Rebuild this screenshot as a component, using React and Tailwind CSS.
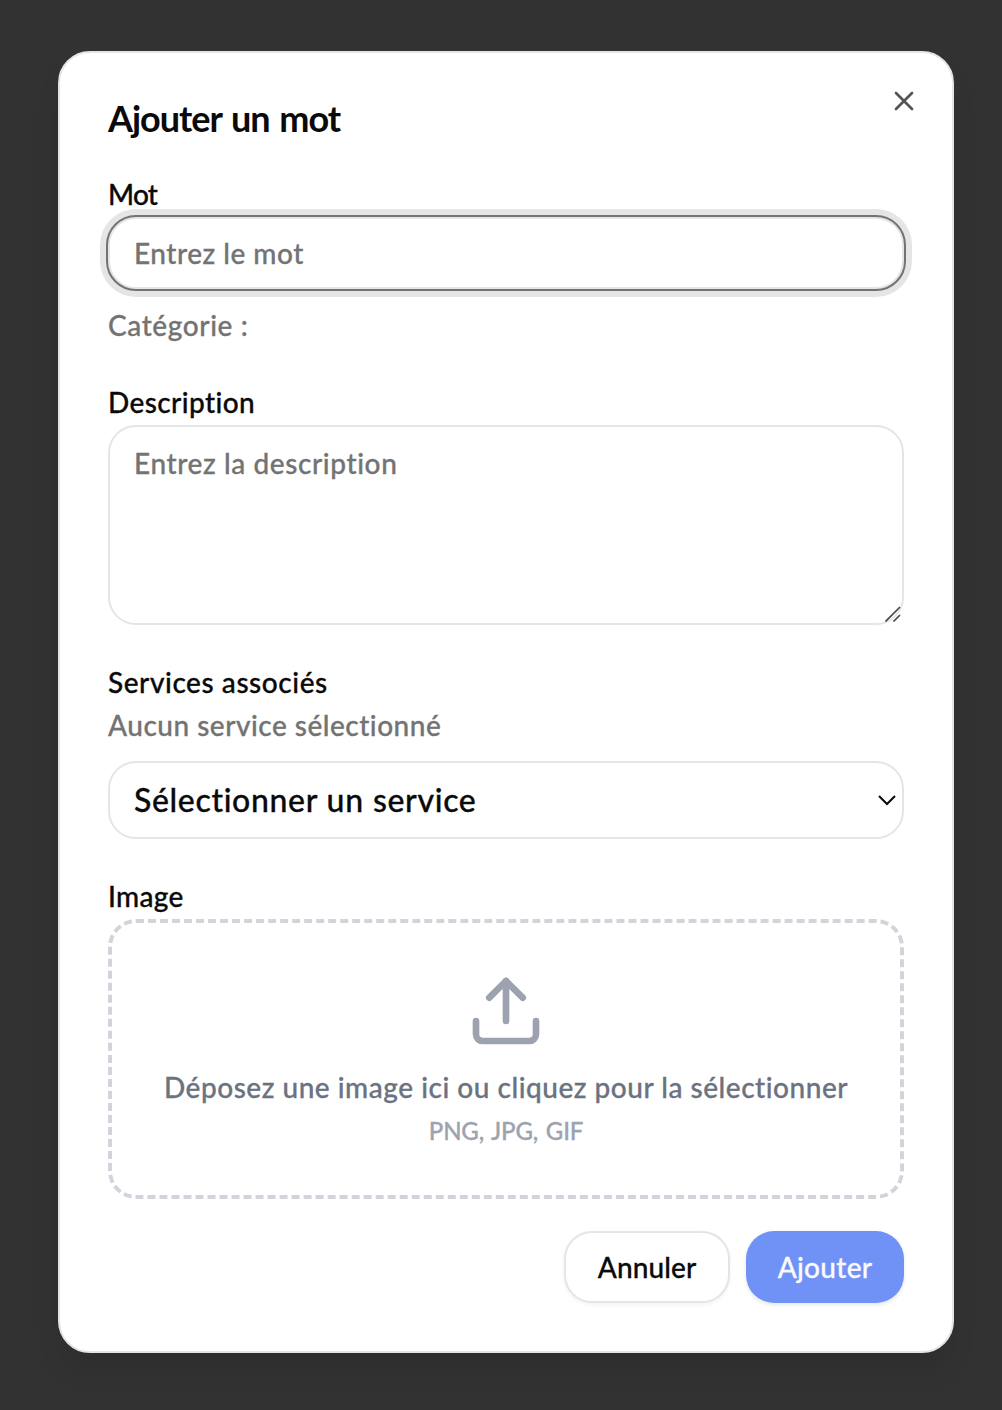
import React from "react";
import { X } from "lucide-react";

function Label({ htmlFor, className = "", children }) {
  return (
    <label htmlFor={htmlFor} className="mb-[9px] -mt-px block h-7 text-[28px] leading-7 whitespace-nowrap text-[#0a0a0a]">
      <span className={className}>{children}</span>
    </label>
  );
}

function UploadIcon() {
  return (
    <svg className="size-20 text-[#9ca3af]" viewBox="0 0 24 24" fill="none" stroke="currentColor" strokeWidth="2" strokeLinecap="round" strokeLinejoin="round">
      <path d="M21 15v4a2 2 0 0 1-2 2H5a2 2 0 0 1-2-2v-4" />
      <path d="M17 8l-5-5-5 5" />
      <path d="M12 3v12" />
    </svg>
  );
}

export default function App() {
  return (
    <div className="flex h-[1410px] w-[1002px] items-start bg-[#323232] pt-[51px] pl-[58px] font-['Lato','Noto_Sans',sans-serif] font-medium [-webkit-text-stroke:0.3px_currentColor]">
      <div role="dialog" className="relative flex h-[1302px] w-[896px] flex-col rounded-[32px] border-2 border-[#e5e5e5] bg-white p-12 shadow-[0_20px_30px_-6px_rgba(0,0,0,0.1)]">
        <button aria-label="Fermer" className="absolute top-8 right-8 text-[#545454]">
          <X className="size-8" strokeWidth={2} />
        </button>

        <h2 className="-mt-px mb-px h-9 text-[36px] leading-9 font-bold whitespace-nowrap text-[#0a0a0a] [-webkit-text-stroke:0px]">
          <span className="tracking-[-1px] [word-spacing:2px]">Ajouter un mot</span>
        </h2>

        <div className="mt-11">
          <Label htmlFor="mot" className="tracking-[-0.8px]">Mot</Label>
          <input
            id="mot"
            placeholder="Entrez le mot"
            className="block h-[72px] w-full rounded-[28px] border-2 border-[#e5e5e5] bg-white px-6 text-[28px] tracking-[0.5px] shadow-[0_0_0_8px_#e5e5e5] outline-2 outline-[#737373] placeholder:text-[#737373]"
          />
          <p className="mt-4 h-10 text-[28px] leading-10 whitespace-nowrap text-[#737373]">
            <span className="tracking-[0.6px]">Catégorie :</span>
          </p>
        </div>

        <div className="mt-11">
          <Label htmlFor="description" className="tracking-[0.4px]">Description</Label>
          <div className="relative">
            <textarea
              id="description"
              placeholder="Entrez la description"
              className="block h-[200px] w-full resize-none rounded-[28px] border-2 border-[#e5e5e5] bg-white px-6 py-4 text-[28px] leading-10 tracking-[0.6px] outline-none placeholder:text-[#737373]"
            />
            <svg className="absolute right-[3px] bottom-[3px] h-4 w-4" viewBox="0 0 16 16" fill="none" stroke="#484848" strokeWidth="1.7">
              <path d="M0.5 15.5L15 1M8.5 15.5L15 9" />
            </svg>
          </div>
        </div>

        <div className="mt-11">
          <Label htmlFor="service" className="tracking-[0.56px]">Services associés</Label>
          <p className="h-10 text-[28px] leading-10 whitespace-nowrap text-[#737373]">
            <span className="tracking-[0.5px]">Aucun service sélectionné</span>
          </p>
          <button id="service" className="mt-4 flex h-[78px] w-full items-center justify-between rounded-[28px] border-2 border-[#e5e5e5] pr-[5px] pl-6 text-[32px] text-[#0a0a0a]">
            <span className="tracking-[0.65px] [word-spacing:0.5px]">Sélectionner un service</span>
            <svg className="h-3 w-5" viewBox="0 0 20 12" fill="none" stroke="#0a0a0a" strokeWidth="2">
              <path d="M2 2L10 10L18 2" />
            </svg>
          </button>
        </div>

        <div className="mt-11">
          <Label className="tracking-[0.3px]">Image</Label>
          <div className="flex h-[280px] flex-col items-center rounded-[28px] border-4 border-dashed border-[#d1d5db] pt-12 whitespace-nowrap">
            <UploadIcon />
            <p className="mt-4 h-10 text-[28px] leading-10 text-[#6b7280]">
              <span className="tracking-[0.52px]">Déposez une image ici ou cliquez pour la sélectionner</span>
            </p>
            <p className="mt-2 h-8 text-2xl leading-8 text-[#9ca3af]">
              <span className="tracking-[-0.2px] [word-spacing:2px]">PNG, JPG, GIF</span>
            </p>
          </div>
        </div>

        <div className="mt-8 flex justify-end gap-4 text-[28px]">
          <button className="h-[72px] w-[166px] rounded-[28px] border-2 border-[#e5e5e5] bg-white text-[#0a0a0a] shadow-[0_2px_4px_rgba(0,0,0,0.05)]">
            <span className="tracking-[0.1px]">Annuler</span>
          </button>
          <button className="h-[72px] w-[158px] rounded-[28px] bg-[#7092f6] text-[#fafafa] shadow-[0_2px_4px_rgba(0,0,0,0.1)]">
            <span className="tracking-[0.3px]">Ajouter</span>
          </button>
        </div>
      </div>
    </div>
  );
}
